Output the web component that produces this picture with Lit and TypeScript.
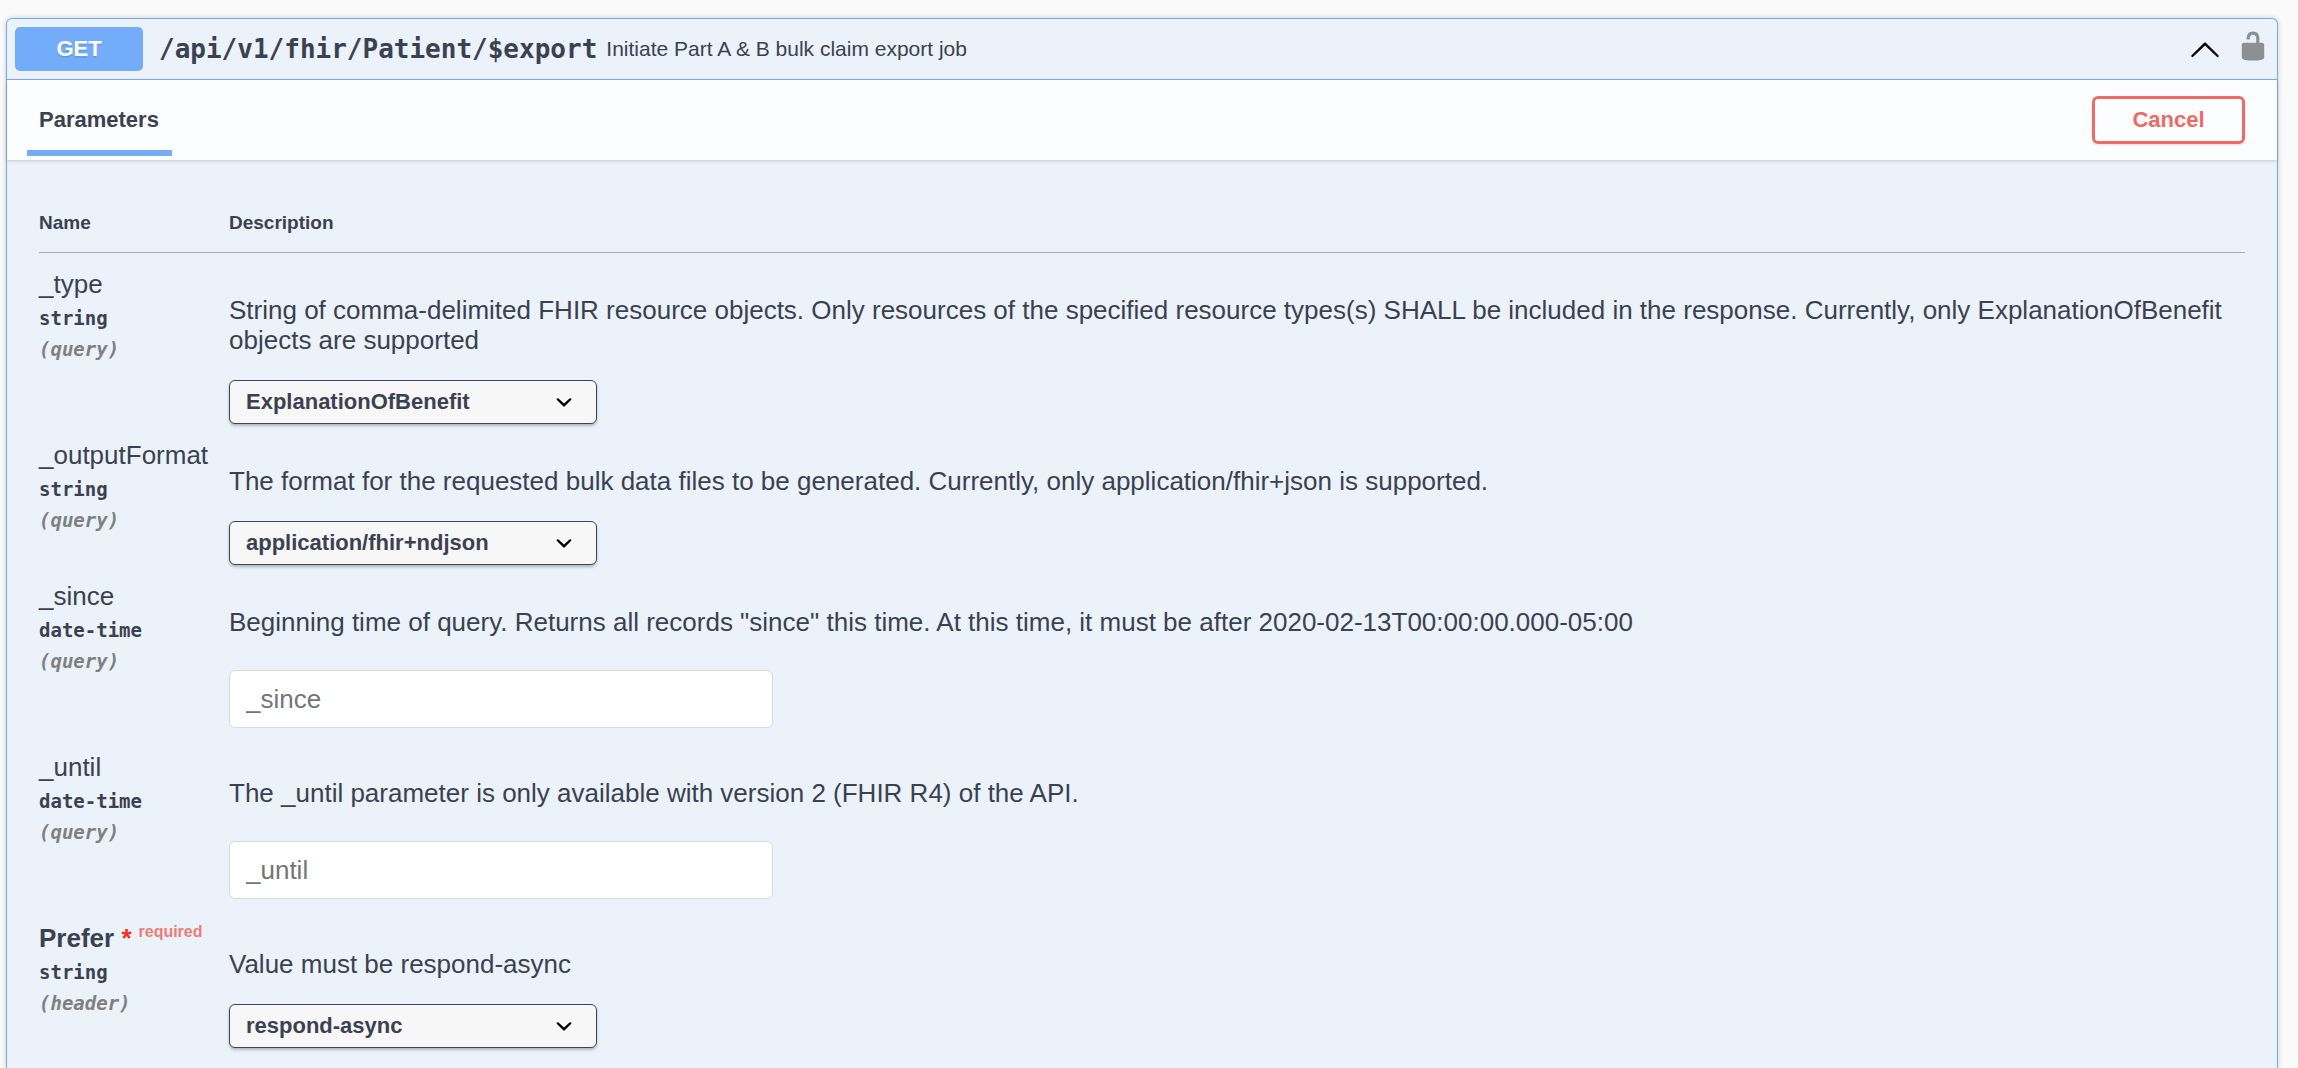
import { LitElement, html, css, nothing } from "lit";
import { customElement, state } from "lit/decorators.js";

interface Parameter {
  name: string;
  type: string;
  location: string;
  description: string;
  required?: boolean;
  options?: string[];
}

const PARAMETERS: Parameter[] = [
  {
    name: "_type",
    type: "string",
    location: "query",
    description:
      "String of comma-delimited FHIR resource objects. Only resources of the specified resource types(s) SHALL be included in the response. Currently, only ExplanationOfBenefit objects are supported",
    options: ["ExplanationOfBenefit"],
  },
  {
    name: "_outputFormat",
    type: "string",
    location: "query",
    description:
      "The format for the requested bulk data files to be generated. Currently, only application/fhir+json is supported.",
    options: ["application/fhir+ndjson"],
  },
  {
    name: "_since",
    type: "date-time",
    location: "query",
    description:
      'Beginning time of query. Returns all records "since" this time. At this time, it must be after 2020-02-13T00:00:00.000-05:00',
  },
  {
    name: "_until",
    type: "date-time",
    location: "query",
    description: "The _until parameter is only available with version 2 (FHIR R4) of the API.",
  },
  {
    name: "Prefer",
    type: "string",
    location: "header",
    description: "Value must be respond-async",
    required: true,
    options: ["respond-async"],
  },
];

@customElement("app-root")
export class AppRoot extends LitElement {
  static styles = css`
    :host {
      display: flex;
      flex-direction: column;
      box-sizing: border-box;
      min-height: 100vh;
      padding: 18px 20px 0 6px;
      background: #fafafa;
      color: #3b4151;
      font-family: "Liberation Sans", Arial, Helvetica, sans-serif;
      font-size: 26px;
      line-height: 30px;
    }
    * {
      box-sizing: border-box;
    }
    button,
    input,
    select {
      margin: 0;
      font-family: inherit;
      color: inherit;
    }
    .operation {
      flex: 1;
      border: 1px solid #73acf8;
      border-bottom: 0;
      border-radius: 6px 6px 0 0;
      background: #ebf2fa;
      box-shadow: 0 0 5px rgba(0, 0, 0, 0.19);
    }
    .summary {
      display: flex;
      align-items: center;
      gap: 16px;
      padding: 8px;
      border-bottom: 1px solid #73acf8;
    }
    .toggle {
      display: flex;
      flex: 1;
      align-items: center;
      min-width: 0;
      padding: 0;
      border: 0;
      background: none;
      text-align: left;
      cursor: pointer;
    }
    .method {
      min-width: 128px;
      margin-right: 16px;
      border-radius: 5px;
      background: #73acf8;
      color: #fff;
      font-size: 22px;
      font-weight: 700;
      line-height: 44px;
      text-align: center;
      text-shadow: 0 2px 0 rgba(0, 0, 0, 0.1);
    }
    .path {
      margin-right: 9px;
      font-family: "DejaVu Sans Mono", monospace;
      font-size: 26px;
      font-weight: 700;
    }
    .title {
      font-size: 21px;
    }
    .icon-button {
      display: flex;
      padding: 0;
      border: 0;
      background: none;
      cursor: pointer;
    }
    .icon {
      width: 32px;
      height: 32px;
      fill: #000;
    }
    .lock {
      padding-bottom: 6px;
      opacity: 0.4;
    }
    .section-header {
      display: flex;
      align-items: center;
      justify-content: space-between;
      padding: 0 32px 0 20px;
      background: #fcfdfe;
      box-shadow: 0 1px 3px rgba(0, 0, 0, 0.18);
    }
    .tab {
      align-self: stretch;
      margin: 0 0 4px;
      padding: 25px 13px 0 12px;
      border-bottom: 6px solid #73acf8;
      font-size: 22px;
      font-weight: 700;
    }
    .cancel {
      min-width: 153px;
      height: 48px;
      margin: 16px 0;
      border: 3px solid #ed6b67;
      border-radius: 6px;
      background: transparent;
      box-shadow: 0 1px 3px rgba(0, 0, 0, 0.12);
      color: #ed6b67;
      font-size: 22px;
      font-weight: 700;
      cursor: pointer;
    }
    .parameters {
      padding: 32px 32px 20px;
    }
    .table {
      width: 100%;
      border-spacing: 0;
      border-collapse: separate;
    }
    .heading {
      padding: 20px 0 18px;
      border-bottom: 1px solid #a9acba;
      font-size: 19px;
      line-height: 22px;
      font-weight: 700;
      text-align: left;
    }
    .heading-name {
      width: 190px;
    }
    .cell {
      padding: 16px 0 0;
      vertical-align: top;
      text-align: left;
      font-weight: 400;
    }
    .name {
      display: block;
      margin-bottom: 4px;
      white-space: nowrap;
    }
    .name-required {
      font-weight: 700;
    }
    .star {
      color: #f5301d;
    }
    .required {
      padding-left: 7px;
      color: #ec7d78;
      font-size: 16px;
      line-height: 0;
      vertical-align: super;
    }
    .type,
    .location {
      font-family: "DejaVu Sans Mono", monospace;
      font-size: 19px;
      font-weight: 700;
    }
    .location {
      margin-top: 1px;
      color: #808080;
      font-style: italic;
    }
    .description {
      margin: 26px 0 25px;
    }
    .select-box {
      display: grid;
      width: 368px;
      align-items: center;
    }
    .select {
      grid-area: 1 / 1;
      width: 100%;
      height: 44px;
      padding: 0 56px 2px 16px;
      border: 1px solid #41444e;
      border-radius: 6px;
      background: #f7f7f7;
      box-shadow: 0 2px 3px rgba(0, 0, 0, 0.25);
      font-size: 22px;
      font-weight: 700;
      appearance: none;
    }
    .select-arrow {
      grid-area: 1 / 1;
      justify-self: end;
      margin-right: 17px;
      pointer-events: none;
    }
    .input {
      display: block;
      width: 100%;
      max-width: 544px;
      height: 58px;
      margin: 33px 0 8px;
      padding: 0 16px;
      border: 1px solid #d9d9d9;
      border-radius: 6px;
      background: #fff;
      font-size: 26px;
    }
    .input::placeholder {
      color: #757575;
      opacity: 1;
    }
  `;

  @state() private expanded = true;

  private toggle() {
    this.expanded = !this.expanded;
  }

  private renderControl(p: Parameter) {
    if (!p.options) {
      return html`<input class="input" id=${p.name} type="text" placeholder=${p.name} />`;
    }
    return html`
      <div class="select-box">
        <select class="select" id=${p.name}>
          ${p.options.map((o) => html`<option>${o}</option>`)}
        </select>
        <svg class="icon select-arrow" viewBox="0 0 20 20" aria-hidden="true">
          <path
            d="M13.418 7.859a.695.695 0 01.978 0 .68.68 0 010 .969l-3.908 3.83a.697.697 0 01-.979 0l-3.908-3.83a.68.68 0 010-.969.695.695 0 01.978 0L10 11l3.418-3.141z"
          />
        </svg>
      </div>
    `;
  }

  private renderRow(p: Parameter) {
    return html`
      <tr>
        <th class="cell" scope="row">
          <label class="name ${p.required ? "name-required" : ""}" for=${p.name}
            >${p.name}${p.required
              ? html`<span class="star">&nbsp;*</span><span class="required">required</span>`
              : nothing}</label
          >
          <div class="type">${p.type}</div>
          <div class="location">(${p.location})</div>
        </th>
        <td class="cell">
          <p class="description">${p.description}</p>
          ${this.renderControl(p)}
        </td>
      </tr>
    `;
  }

  render() {
    return html`
      <section class="operation">
        <div class="summary">
          <button class="toggle" aria-expanded=${this.expanded} @click=${this.toggle}>
            <span class="method">GET</span>
            <span class="path">/api/v1/fhir/Patient/$export</span>
            <span class="title">Initiate Part A &amp; B bulk claim export job</span>
          </button>
          <button class="icon-button" aria-label="Collapse operation" @click=${this.toggle}>
            <svg class="icon" viewBox="0 0 20 20" aria-hidden="true">
              <path
                d="M17.418 14.908c.272.268.709.268.979 0s.271-.701 0-.969l-7.908-7.83c-.27-.268-.707-.268-.979 0l-7.908 7.83c-.27.268-.27.701 0 .969.271.268.709.268.979 0L10 7.767z"
              />
            </svg>
          </button>
          <button class="icon-button lock" aria-label="Authorize">
            <svg class="icon" viewBox="0 0 20 20" aria-hidden="true">
              <path
                d="M15.8 8H14V5.6C14 2.703 12.665 1 10 1 7.334 1 6 2.703 6 5.6V6h2v-.801C8 3.754 8.797 3 10 3c1.203 0 2 .754 2 2.199V8H4c-.553 0-1 .646-1 1.199V17c0 .549.428 1.139.951 1.307l1.197.387C5.672 18.861 6.55 19 7.1 19h5.8c.549 0 1.428-.139 1.951-.307l1.196-.387c.524-.167.953-.757.953-1.306V9.199C17 8.646 16.352 8 15.8 8z"
              />
            </svg>
          </button>
        </div>
        ${this.expanded
          ? html`
              <div class="section-header">
                <h4 class="tab">Parameters</h4>
                <button class="cancel">Cancel</button>
              </div>
              <div class="parameters">
                <table class="table">
                  <thead>
                    <tr>
                      <th class="heading heading-name" scope="col">Name</th>
                      <th class="heading" scope="col">Description</th>
                    </tr>
                  </thead>
                  <tbody>
                    ${PARAMETERS.map((p) => this.renderRow(p))}
                  </tbody>
                </table>
              </div>
            `
          : nothing}
      </section>
    `;
  }
}
